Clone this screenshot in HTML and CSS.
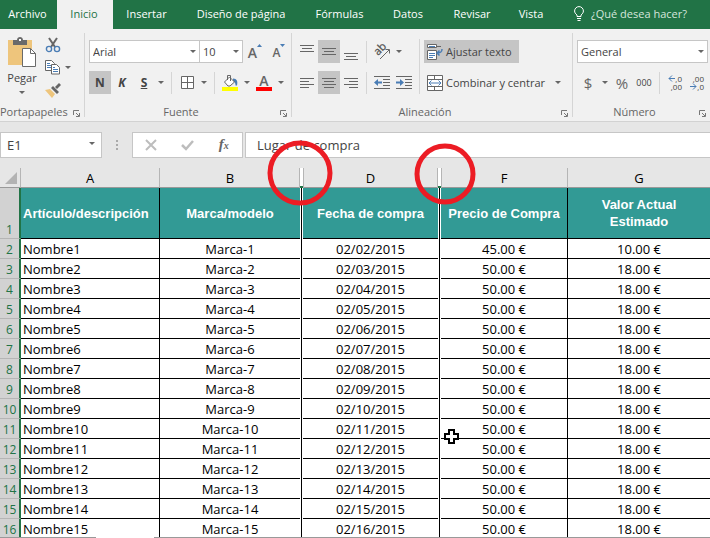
FILE: index.html
```
<!DOCTYPE html>
<html lang="es">
<head>
  <meta charset="UTF-8">
  <meta name="viewport" content="width=device-width, initial-scale=1.0">
  <title>Inventario</title>
  <link rel="stylesheet" href="styles.css">
</head>
<body>

  <nav class="tabs">
    <a href="#">Archivo</a>
    <a href="#" class="active">Inicio</a>
    <a href="#">Insertar</a>
    <a href="#">Diseño de página</a>
    <a href="#">Fórmulas</a>
    <a href="#">Datos</a>
    <a href="#">Revisar</a>
    <a href="#">Vista</a>
    <a href="#" class="tell-me">
      <svg width="10" height="16" viewBox="0 0 10 16" fill="none" stroke="#fff"><path d="M3 10.500V9C1.500 7.800.6 6.600.6 5a4.400 4.400 0 0 1 8.800 0c0 1.600-.9 2.800-2.400 4v1.500zM3 12.500h4M3.500 14.500h3"/></svg>
      ¿Qué desea hacer?
    </a>
  </nav>

  <div class="ribbon">
    <section class="group clipboard">
      <div class="group-body">
        <button class="paste">
          <svg width="28" height="30" viewBox="0 0 28 30"><path fill="#eec57c" d="M0 3h24v25H0z"/><path fill="#6a6a6a" d="M5 3h4c0-4 6-4 6 0h4v5H5z"/><path fill="#fff" d="M11 2h2v2h-2z"/><path fill="#fff" stroke="#6a6a6a" d="M14.500 11.500h8l5 5v13h-13z"/><path fill="none" stroke="#6a6a6a" d="M22.500 11.500v5h5"/></svg>
          <span>Pegar</span>
          <i class="caret"></i>
        </button>
        <div class="clip-tools">
          <button aria-label="Cortar">
            <svg width="16" height="16" viewBox="0 0 16 16" fill="none"><path stroke="#666" stroke-width="2" d="M4 1l6 9M12 1L6 10"/><circle cx="4" cy="12" r="2.600" stroke="#4a7db5" stroke-width="1.400"/><circle cx="12" cy="12" r="2.600" stroke="#4a7db5" stroke-width="1.400"/></svg>
          </button>
          <button aria-label="Copiar">
            <svg width="16" height="15" viewBox="0 0 16 15" fill="#fff" stroke="#666"><path d="M.5.5h6l3 3v7h-9z"/><path stroke="#4a7db5" d="M2 3.500h3M2 5.500h4M2 7.500h4"/><path d="M6.500 4.500h5l3 3v6.500h-8z"/><path stroke="#4a7db5" d="M8 7.500h2M8 9.500h5M8 11.500h5"/></svg>
          </button>
          <i class="caret"></i>
          <button aria-label="Copiar formato">
            <svg width="16" height="15" viewBox="0 0 16 15"><path fill="#eec57c" d="M0 7l5-1 5 5-3 4z"/><path fill="#666" d="M6 5l2-2 6 6-2 2zM10 4l4-4 2 2-4 4z"/></svg>
          </button>
        </div>
      </div>
      <footer>Portapapeles<svg class="launcher" viewBox="0 0 7 7"><path d="M.5 5V.5H6M3 3l3 3M6.500 3v3.500H3"/></svg></footer>
    </section>

    <section class="group font">
      <div class="group-body rows">
        <div class="row">
          <span class="select font-name"><select aria-label="Fuente"><option>Arial</option></select></span>
          <span class="select font-size"><select aria-label="Tamaño"><option>10</option></select></span>
          <button class="size-step grow" aria-label="Aumentar tamaño">A<svg width="5" height="3" viewBox="0 0 5 3"><path fill="#4a7db5" d="M0 3h5L2.500 0z"/></svg></button>
          <button class="size-step" aria-label="Disminuir tamaño">A<svg width="5" height="3" viewBox="0 0 5 3"><path fill="#4a7db5" d="M0 0h5L2.500 3z"/></svg></button>
        </div>
        <div class="row">
          <button class="letter on"><b>N</b></button>
          <button class="letter"><b><em>K</em></b></button>
          <button class="letter"><b><u>S</u></b></button>
          <i class="caret"></i>
          <i class="sep"></i>
          <button aria-label="Bordes"><svg width="13" height="13" viewBox="0 0 13 13" fill="#fff" stroke="#666"><path d="M.5.5h12v12H.5zM6.500 0v13M0 6.500h13"/></svg></button>
          <i class="caret"></i>
          <i class="sep"></i>
          <button aria-label="Color de relleno"><svg width="16" height="17" viewBox="0 0 16 17"><path fill="#4a7db5" d="M11 4.500c4 0 5 3 4 7h-1.500c0-2 0-3-2.500-4z"/><path fill="#fff" stroke="#666" d="M2.500 8l5-5 5 5-4.500 4h-2z"/><path fill="none" stroke="#666" d="M5.500 6V1.500h3V7"/><path fill="#ff0" d="M0 13h16v4H0z"/></svg></button>
          <i class="caret"></i>
          <button class="font-color" aria-label="Color de fuente">A</button>
          <i class="caret"></i>
        </div>
      </div>
      <footer>Fuente<svg class="launcher" viewBox="0 0 7 7"><path d="M.5 5V.5H6M3 3l3 3M6.500 3v3.500H3"/></svg></footer>
    </section>

    <section class="group align">
      <div class="group-body">
        <div class="rows left">
          <div class="row">
            <button aria-label="Alinear arriba"><svg class="lines" viewBox="0 0 14 16"><path d="M0 1.500h14M2 4.500h10M0 7.500h14"/></svg></button>
            <button class="on" aria-label="Alinear en el medio"><svg class="lines" viewBox="0 0 14 16"><path d="M0 4.500h14M2 7.500h10M0 10.500h14"/></svg></button>
            <button aria-label="Alinear abajo"><svg class="lines" viewBox="0 0 14 16"><path d="M0 9.500h14M2 12.500h10M0 15.500h14"/></svg></button>
            <i class="sep"></i>
            <button aria-label="Orientación"><svg width="18" height="18" viewBox="0 0 18 18"><text x="0" y="0" font-size="11" fill="#555" stroke="#555" stroke-width=".3" transform="translate(5 13) rotate(-45)">ab</text><path fill="none" stroke="#666" d="M7 16l9-9M12.500 6.500h4v4"/></svg></button>
            <i class="caret"></i>
          </div>
          <div class="row">
            <button aria-label="Alinear a la izquierda"><svg class="lines" viewBox="0 0 14 16"><path d="M0 3.500h14M0 6.500h9M0 9.500h14M0 12.500h9"/></svg></button>
            <button class="on" aria-label="Centrar"><svg class="lines" viewBox="0 0 14 16"><path d="M0 3.500h14M2 6.500h10M0 9.500h14M2 12.500h10"/></svg></button>
            <button aria-label="Alinear a la derecha"><svg class="lines" viewBox="0 0 14 16"><path d="M0 3.500h14M5 6.500h9M0 9.500h14M5 12.500h9"/></svg></button>
            <i class="sep"></i>
            <button aria-label="Disminuir sangría"><svg width="16" height="14" viewBox="0 0 16 14"><path stroke="#666" d="M0 .5h16M9 3.500h7M9 6.500h7M9 9.500h7M0 12.500h16"/><path fill="#4a7db5" d="M0 6.500L4 3v2.500h4v2H4V10z"/></svg></button>
            <button aria-label="Aumentar sangría"><svg width="16" height="14" viewBox="0 0 16 14"><path stroke="#666" d="M0 .5h16M9 3.500h7M9 6.500h7M9 9.500h7M0 12.500h16"/><path fill="#4a7db5" d="M8 6.500L4 3v2.500H0v2h4V10z"/></svg></button>
          </div>
        </div>
        <i class="sep tall"></i>
        <div class="rows">
          <div class="row">
            <button class="wide on"><svg width="16" height="16" viewBox="0 0 16 16"><path fill="#fff" stroke="#666" d="M.5.500h9v3h-9zM.5 6.500h9v9h-9z"/><path stroke="#666" d="M10 2.500h4"/><path stroke="#4a7db5" d="M2 2.500h6M2 9.500h6M2 11.500h6M2 13.500h4"/><path fill="none" stroke="#4a7db5" stroke-width="1.500" d="M15 5c0 3-1 4-5 4M12.500 6.500L10 9l2.500 2.500"/></svg>Ajustar texto</button>
          </div>
          <div class="row">
            <button class="wide"><svg width="16" height="16" viewBox="0 0 16 16"><path fill="#fff" stroke="#666" d="M.5.5h15v15H.5zM0 4.500h16M0 11.500h16M7.500 0v4M7.500 12v4"/><path fill="none" stroke="#4a7db5" d="M2 8h12M4.500 5.500L2 8l2.500 2.500M11.500 5.500L14 8l-2.500 2.500"/></svg>Combinar y centrar</button>
            <i class="caret"></i>
          </div>
        </div>
      </div>
      <footer>Alineación<svg class="launcher" viewBox="0 0 7 7"><path d="M.5 5V.5H6M3 3l3 3M6.500 3v3.500H3"/></svg></footer>
    </section>

    <section class="group number">
      <div class="group-body rows">
        <div class="row">
          <span class="select format"><select aria-label="Formato de número"><option>General</option></select></span>
        </div>
        <div class="row">
          <button class="symbol">$</button>
          <i class="caret"></i>
          <button class="symbol">%</button>
          <button class="zeros">000</button>
          <i class="sep"></i>
          <button class="decimals" aria-label="Aumentar decimales">
            <span><svg width="7" height="7" viewBox="0 0 7 7"><path d="M1 3.500h6M4 .5l-3 3 3 3"/></svg>,0</span>
            <span>,00</span>
          </button>
          <button class="decimals" aria-label="Disminuir decimales">
            <span>,00</span>
            <span><svg width="7" height="7" viewBox="0 0 7 7"><path d="M0 3.500h6M3 .5l3 3-3 3"/></svg>,0</span>
          </button>
        </div>
      </div>
      <footer>Número<svg class="launcher" viewBox="0 0 7 7"><path d="M.5 5V.5H6M3 3l3 3M6.500 3v3.500H3"/></svg></footer>
    </section>
  </div>

  <div class="formula-bar">
    <span class="select name-box"><select aria-label="Cuadro de nombres"><option>E1</option></select></span>
    <svg class="dots" width="2" height="10" viewBox="0 0 2 10" fill="#aaa"><path d="M0 0h2v2H0zM0 4h2v2H0zM0 8h2v2H0z"/></svg>
    <div class="formula-buttons">
      <button aria-label="Cancelar"><svg width="12" height="10" viewBox="0 0 12 10"><path stroke="#bdbdbd" stroke-width="2" d="M1 0l10 10M11 0L1 10"/></svg></button>
      <button aria-label="Introducir"><svg width="13" height="10" viewBox="0 0 13 10"><path fill="none" stroke="#bdbdbd" stroke-width="2.500" d="M1 5l4 4 7-8"/></svg></button>
      <button class="fx">f<small>x</small></button>
    </div>
    <input type="text" aria-label="Barra de fórmulas" value="Lugar de compra">
  </div>

  <main class="sheet">
    <table>
      <colgroup>
        <col class="col-num"><col class="col-a"><col class="col-b"><col class="col-seam"><col class="col-d"><col class="col-seam"><col class="col-f"><col>
      </colgroup>
      <thead>
        <tr>
          <th class="corner"><svg width="12" height="12" viewBox="0 0 12 12"><path fill="#b3b3b3" d="M12 0v12H0z"/></svg></th>
          <th>A</th>
          <th class="flat">B</th>
          <th class="seam"><svg class="ring" width="66" height="66" viewBox="0 0 66 66"><circle cx="33" cy="33" r="30"/></svg></th>
          <th class="flat">D</th>
          <th class="seam"><svg class="ring ring-small" width="62" height="62" viewBox="0 0 62 62"><circle cx="31" cy="31" r="28"/></svg></th>
          <th>F</th>
          <th class="flat">G</th>
        </tr>
      </thead>
      <tbody id="rows">
        <tr class="titles">
          <th>1</th>
          <td>Artículo/descripción</td>
          <td class="flat">Marca/modelo</td>
          <td class="seam"></td>
          <td class="flat">Fecha de compra</td>
          <td class="seam"></td>
          <td>Precio de Compra</td>
          <td>Valor Actual Estimado</td>
        </tr>
      </tbody>
    </table>
  </main>

  <div class="sheet-edge"><i></i><i class="gap"></i><i></i></div>

  <script src="script.js"></script>
</body>
</html>
```
FILE: styles.css
```
* {
  box-sizing: border-box;
}

body {
  display: flex;
  flex-direction: column;
  height: 100vh;
  margin: 0;
  overflow: hidden;
  background-color: #e6e6e6;
  color: #444;
  font-family: "Open Sans", sans-serif;
  font-size: 11px;
}

button {
  display: flex;
  align-items: center;
  justify-content: center;
  flex: none;
  width: 22px;
  height: 23px;
  padding: 0;
  border: none;
  background: none;
  color: #444;
  font: inherit;
}

button.on {
  background-color: #c5c5c5;
}

svg {
  display: block;
  flex: none;
  overflow: visible;
}

/* ribbon tabs */

.tabs {
  display: grid;
  grid-template-columns: 57px 56px 69px 120px 77px 60px 68px 50px 1fr;
  flex: none;
  height: 29px;
  background-color: #217346;
}

.tabs a {
  display: flex;
  align-items: center;
  justify-content: center;
  padding: 0 2px 2px 0;
  color: #fff;
  text-decoration: none;
  white-space: nowrap;
}

.tabs .active {
  background-color: #f1f1f1;
  color: #217346;
}

.tabs .tell-me {
  justify-content: flex-start;
  gap: 7px;
  padding-left: 17px;
  color: #d5e6dc;
}

/* ribbon */

.ribbon {
  display: flex;
  flex: none;
  height: 93px;
  padding-top: 4px;
  border-bottom: 1px solid #d2d2d2;
  background-color: #f1f1f1;
}

.group {
  display: flex;
  flex-direction: column;
  flex: none;
  height: 84px;
  padding-left: 4px;
  border-right: 1px solid #d5d5d5;
}

.clipboard {
  width: 85px;
  padding-left: 0;
}

.font {
  width: 207px;
}

.align {
  width: 281px;
}

.number {
  flex: 1;
  border-right: none;
}

.group-body {
  display: flex;
  flex: 1;
}

.rows {
  display: flex;
  flex-direction: column;
  gap: 8px;
  padding-top: 7px;
}

.row {
  display: flex;
  align-items: center;
  height: 23px;
}

.group footer {
  position: relative;
  flex: none;
  height: 10px;
  padding-right: 18px;
  line-height: 10px;
  text-align: center;
  color: #666;
}

.launcher {
  position: absolute;
  right: 4px;
  top: 3px;
  width: 7px;
  height: 7px;
  fill: none;
  stroke: #777;
}

.caret {
  display: flex;
  justify-content: center;
  flex: none;
  width: 12px;
}

.caret::after,
.select::after {
  content: "";
  border: 3px solid transparent;
  border-top-color: #666;
  border-bottom: none;
}

.sep {
  flex: none;
  width: 1px;
  height: 22px;
  margin: 0 4px;
  background-color: #d5d5d5;
}

.sep.tall {
  height: 55px;
  margin-top: 6px;
}

.select {
  position: relative;
  flex: none;
  height: 23px;
}

.select select {
  width: 100%;
  height: 100%;
  padding: 0 3px;
  border: 1px solid #c6c6c6;
  border-radius: 0;
  background-color: #fff;
  color: #444;
  font: inherit;
  appearance: none;
}

.select::after {
  position: absolute;
  right: 4px;
  top: 10px;
}

.font-name {
  width: 111px;
}

.font-size {
  width: 43px;
}

.font-name + .select select {
  border-left: none;
}

.size-step {
  align-items: flex-start;
  font-size: 12px;
  font-weight: 600;
  line-height: 26px;
  color: #666;
}

.size-step svg {
  margin-top: 4px;
}

.grow {
  margin: 0 2px 0 1px;
  font-size: 14px;
}

.format {
  width: 131px;
}

.paste {
  flex-direction: column;
  justify-content: flex-start;
  width: 44px;
  height: 65px;
  padding-top: 4px;
}

.paste span {
  margin: 3px 0 6px;
}

.clip-tools {
  display: grid;
  grid-template-columns: 18px 12px;
  grid-auto-rows: 23px;
  align-items: center;
}

.clip-tools button {
  grid-column: 1;
  width: 18px;
}

.letter {
  font-size: 12px;
}

.font-color {
  width: 16px;
  height: 17px;
  margin: 0 3px;
  border-bottom: 4px solid red;
  color: #666;
  font-size: 14px;
  font-weight: 600;
  line-height: 13px;
}

.lines {
  width: 14px;
  height: 16px;
  stroke: #666;
}

.align .left {
  width: 119px;
}

.wide {
  gap: 3px;
  width: auto;
  padding: 0 7px 0 3px;
}

.symbol {
  font-size: 15px;
  color: #666;
}

.zeros {
  font-size: 9px;
}

.decimals {
  flex-direction: column;
  align-items: stretch;
  padding: 0 4px;
  font-size: 8px;
  line-height: 8px;
}

.decimals span {
  display: flex;
  justify-content: flex-end;
}

.decimals svg {
  fill: none;
  stroke: #4a7db5;
}

/* formula bar */

.formula-bar {
  display: flex;
  align-items: center;
  flex: none;
  height: 46px;
  font-size: 13px;
}

.name-box {
  width: 102px;
  height: 26px;
}

.name-box select {
  padding: 0 6px;
}

.name-box::after {
  right: 7px;
}

.dots {
  margin: 0 14px;
}

.formula-buttons {
  display: flex;
  align-items: center;
  justify-content: space-around;
  width: 111px;
  height: 26px;
  border: 1px solid #c6c6c6;
  background-color: #fff;
}

.fx {
  align-items: baseline;
  color: #666;
  font-family: "Liberation Serif", serif;
  font-size: 15px;
  font-style: italic;
  font-weight: bold;
  line-height: 20px;
}

.fx small {
  font-size: 10px;
}

.formula-bar input {
  flex: 1;
  min-width: 0;
  height: 26px;
  margin-left: 2px;
  padding: 0 11px;
  border: 1px solid #c6c6c6;
  border-right: none;
  border-radius: 0;
  background-color: #fff;
  color: #444;
  font: inherit;
}

/* sheet */

.sheet {
  flex: 1;
  min-height: 0;
  background-color: #fff;
}

table {
  width: 100%;
  border-collapse: separate;
  border-spacing: 0;
  table-layout: fixed;
  color: #000;
  font-size: 13px;
}

.col-num {
  width: 21px;
}

.col-a {
  width: 139px;
}

.col-b {
  width: 140px;
}

.col-seam {
  width: 3px;
}

.col-d {
  width: 135px;
}

.col-f {
  width: 127px;
}

th,
td {
  height: 20px;
  padding: 2px 0 0;
  border-right: 1px solid #000;
  border-bottom: 1px solid #000;
  font-weight: normal;
  line-height: 17px;
  text-align: center;
  white-space: nowrap;
}

td:nth-child(2) {
  padding-left: 2px;
  text-align: left;
}

.flat,
td:last-child {
  border-right: none;
}

thead th {
  border-right-color: #b5b5b5;
  border-bottom-color: #999;
  background-color: #e6e6e6;
}

.corner svg {
  margin: 2px 0 3px 5px;
}

tbody th {
  border-right: 2px solid #217346;
  border-bottom-color: #b5b5b5;
  background-color: #d2d2d2;
  color: #217346;
  font-size: 12px;
}

td.seam {
  border: solid #fff;
  border-width: 0 1px;
  background-color: #000;
}

th.seam {
  position: relative;
  border-right: none;
  border-bottom: 2px solid #217346;
  background-color: #fff;
  box-shadow: -1px 0 #b5b5b5, 1px 0 #b5b5b5;
}

.ring {
  position: absolute;
  left: -33px;
  top: -28px;
  z-index: 1;
  fill: none;
  stroke: #ec1c24;
  stroke-width: 5px;
}

.ring-small {
  left: -24px;
  top: -25px;
}

.titles th,
.titles td {
  height: 51px;
}

.titles th {
  vertical-align: bottom;
}

.titles td:not(.seam) {
  padding-top: 0;
  background-color: #329a95;
  color: #fff;
  font-family: "Liberation Sans", sans-serif;
  font-weight: bold;
}

.titles td:last-child {
  padding: 0 24px;
  white-space: normal;
}

td.pointed {
  position: relative;
}

.pointer {
  position: absolute;
  left: 3px;
  top: 10px;
  z-index: 1;
  fill: #fff;
  stroke: #000;
  stroke-width: 2px;
}

.sheet-edge {
  display: grid;
  grid-template-columns: 96px 58px 1fr;
  position: relative;
  z-index: 1;
  flex: none;
  height: 1px;
  background-color: #999;
}

.sheet-edge .gap {
  background-color: #fff;
}
```
FILE: script.js
```
const rows = document.getElementById('rows');

for (let i = 1; i <= 15; i++) {
  const day = String(i + 1).padStart(2, '0');
  const price = i === 1 ? '45.00 €' : '50.00 €';
  const value = i === 1 ? '10.00 €' : '18.00 €';

  const row = document.createElement('tr');
  row.innerHTML = `
    <th>${i + 1}</th>
    <td>Nombre${i}</td>
    <td class="flat">Marca-${i}</td>
    <td class="seam"></td>
    <td class="flat">02/${day}/2015</td>
    <td class="seam"></td>
    <td>${price}</td>
    <td>${value}</td>
  `;
  rows.appendChild(row);
}

// mouse pointer over the price of Nombre10
const cell = rows.children[10].children[6];
cell.classList.add('pointed');
cell.insertAdjacentHTML('beforeend', `
  <svg class="pointer" width="16" height="16" viewBox="0 0 16 16">
    <path d="M5 1h5v4h4v5h-4v4H5v-4H1V5h4z"/>
  </svg>
`);
```
